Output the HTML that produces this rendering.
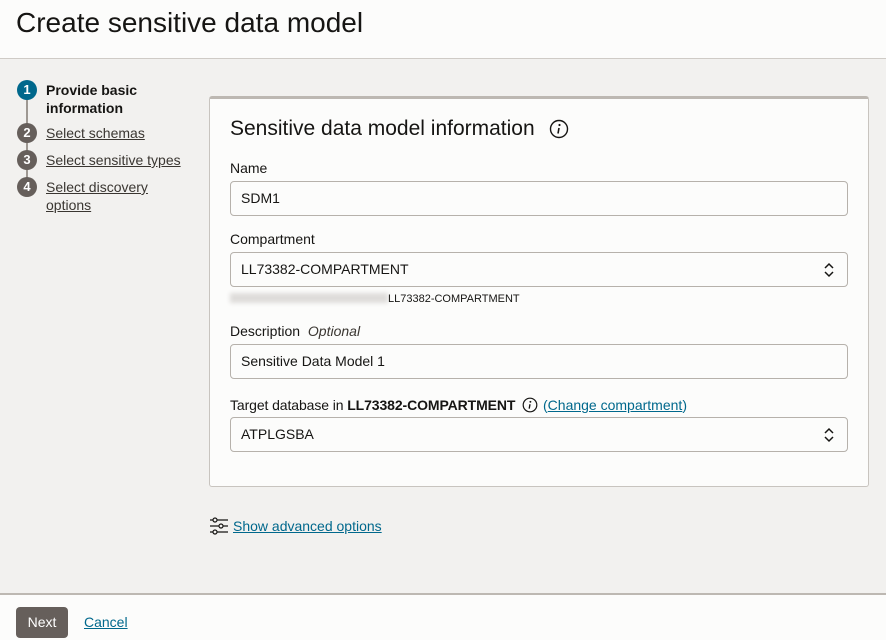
<!DOCTYPE html>
<html><head><style>
*{box-sizing:border-box;margin:0;padding:0}
body{width:886px;height:640px;overflow:hidden;font-family:"Liberation Sans",Arial,sans-serif;color:#161513;background:#f2f1ef;position:relative}
.hdr{position:absolute;left:0;top:0;width:886px;height:59px;background:#fcfcfb;border-bottom:1px solid #cfcbc6}
.hdr h1{position:absolute;left:16px;top:7px;font-size:28px;font-weight:normal;color:#161513}
.ftr{position:absolute;left:0;top:593px;width:886px;height:47px;background:#fcfcfb;border-top:2px solid #bdb8b2}
.btn{position:absolute;left:16px;top:12px;width:52px;height:31px;background:#665f5b;color:#fff;border-radius:4px;font-size:14px;text-align:center;line-height:31px}
.cancel{position:absolute;left:84px;top:19px;font-size:14px;color:#00688c;text-decoration:underline}
.step{position:absolute;left:17px;width:20px;height:20px;border-radius:50%;background:#665f5b;color:#fff;font-size:13px;font-weight:bold;text-align:center;line-height:20px}
.line{position:absolute;left:26px;width:2px;background:#9e9892}
.sl{position:absolute;left:46px;font-size:14px;color:#161513;line-height:18px}
.sl.u{text-decoration:underline;color:#3a3631}
.panel{position:absolute;left:209px;top:96px;width:660px;height:391px;background:#fcfcfb;border:1px solid #c8c4bf;border-top:3px solid #bdb8b2;border-radius:3px}
.t{position:absolute;font-size:14px}
.inp{position:absolute;left:230px;width:618px;height:35px;border:1px solid #b6b1ab;border-radius:4px;background:#fcfcfb;font-size:14px;padding:0 10px;line-height:33px}
.chev{position:absolute;right:12px;top:9px}
</style></head><body>
<div class="hdr"><h1>Create sensitive data model</h1></div>

<div class="line" style="top:98px;height:90px"></div>
<div class="step" style="top:80px;background:#00688c">1</div>
<div class="step" style="top:123px">2</div>
<div class="step" style="top:150px">3</div>
<div class="step" style="top:177px">4</div>
<div class="sl" style="top:81px;font-weight:bold">Provide basic<br>information</div>
<div class="sl u" style="top:124px">Select schemas</div>
<div class="sl u" style="top:151px">Select sensitive types</div>
<div class="sl u" style="top:178px">Select discovery<br>options</div>

<div class="panel"></div>
<div class="t" style="left:230px;top:117px;font-size:21px">Sensitive data model information</div>
<svg style="position:absolute;left:549px;top:119px" width="20" height="20" viewBox="0 0 20 20"><circle cx="10" cy="10" r="8.5" fill="none" stroke="#161513" stroke-width="1.4"/><circle cx="10.5" cy="6" r="1.1" fill="#161513"/><path d="M10 9 L9 14.5" stroke="#161513" stroke-width="1.6"/></svg>

<div class="t" style="left:230px;top:160px">Name</div>
<div class="inp" style="top:181px">SDM1</div>
<div class="t" style="left:230px;top:231px">Compartment</div>
<div class="inp" style="top:252px">LL73382-COMPARTMENT<svg class="chev" width="12" height="16" viewBox="0 0 12 16"><path d="M2 6 L6 2 L10 6 M2 10 L6 14 L10 10" fill="none" stroke="#161513" stroke-width="1.5"/></svg></div>
<div style="position:absolute;left:230px;top:293px;width:158px;height:10px;background:#dedcda;filter:blur(2px)"></div>
<div class="t" style="left:388px;top:293px;font-size:11px">LL73382-COMPARTMENT</div>
<div class="t" style="left:230px;top:323px">Description <i style="color:#3a3631;margin-left:4px">Optional</i></div>
<div class="inp" style="top:344px">Sensitive Data Model 1</div>
<div class="t" style="left:230px;top:397px;letter-spacing:-0.1px">Target database in <b>LL73382-COMPARTMENT</b></div>
<svg style="position:absolute;left:522px;top:397px" width="16" height="16" viewBox="0 0 20 20"><circle cx="10" cy="10" r="8.5" fill="none" stroke="#161513" stroke-width="1.5"/><circle cx="10.5" cy="6" r="1.2" fill="#161513"/><path d="M10 9 L9 14.5" stroke="#161513" stroke-width="1.7"/></svg>
<div class="t" style="left:543px;top:397px;color:#00688c">(<u>Change compartment</u>)</div>
<div class="inp" style="top:417px">ATPLGSBA<svg class="chev" width="12" height="16" viewBox="0 0 12 16"><path d="M2 6 L6 2 L10 6 M2 10 L6 14 L10 10" fill="none" stroke="#161513" stroke-width="1.5"/></svg></div>

<svg style="position:absolute;left:210px;top:517px" width="18" height="18" viewBox="0 0 18 18" fill="none" stroke="#161513" stroke-width="1.2"><path d="M0 3h3M7 3h11M0 9h9M13 9h5M0 15h3M7 15h11"/><circle cx="5" cy="3" r="2"/><circle cx="11" cy="9" r="2"/><circle cx="5" cy="15" r="2"/></svg>
<div class="t" style="left:233px;top:518px;color:#00688c;text-decoration:underline">Show advanced options</div>

<div class="ftr"><div class="btn">Next</div><div class="cancel">Cancel</div></div>
</body></html>
